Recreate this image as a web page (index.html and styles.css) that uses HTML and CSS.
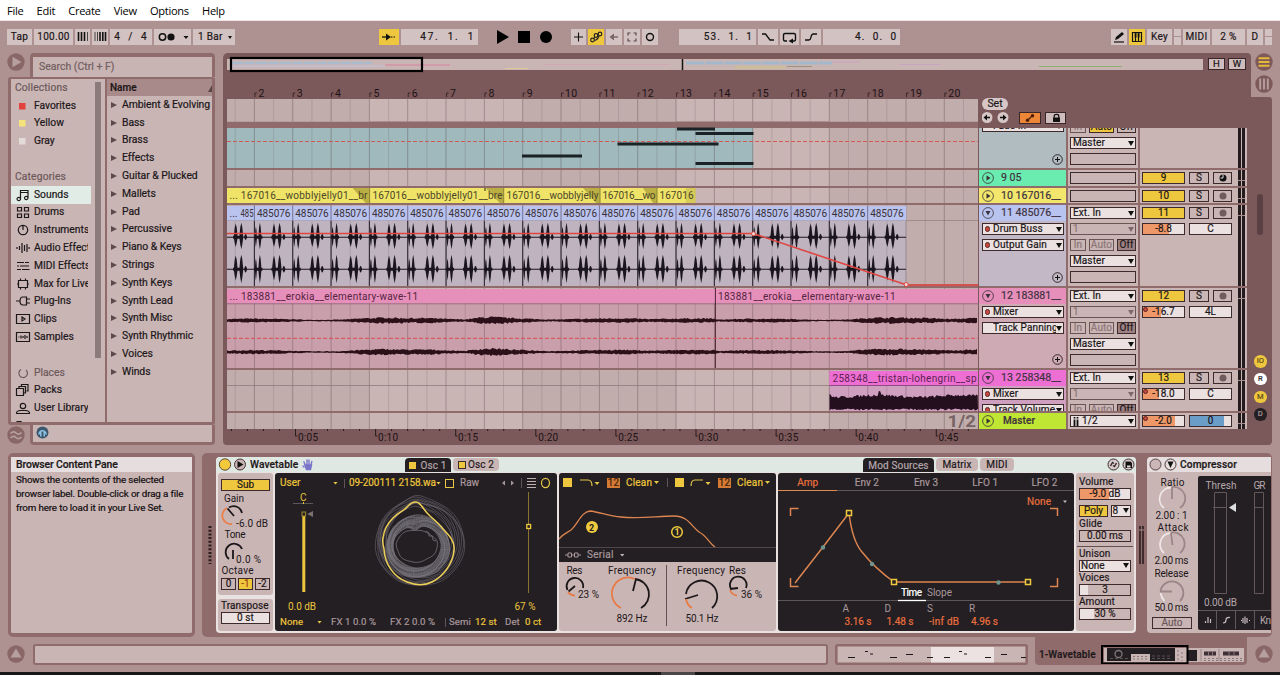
FILE: index.html
```html
<!DOCTYPE html>
<html lang="en">
<head>
<meta charset="utf-8">
<title>Live Set</title>
<link rel="stylesheet" href="styles.css">
</head>
<body>
<nav class="menubar"><span>File</span><span>Edit</span><span>Create</span><span>View</span><span>Options</span><span>Help</span></nav>

<header class="toolbar">
  <div class="group g-tempo">
    <span class="tb w25">Tap</span><span class="tb w39 wide">100.00</span>
    <span class="tb w15"><svg width="15" height="16"><path d="M3.5 3v9M6.500 3v9M9.500 3v9" stroke="#111" stroke-width="1.6"/><path d="M12.500 3v9" stroke="#111" stroke-width=".7"/></svg></span>
    <span class="tb w16"><svg width="16" height="16"><path d="M3 3v9M5.500 3v9" stroke="#111" stroke-width=".7"/><path d="M8 3v9M10.800 3v9M13.500 3v9" stroke="#111" stroke-width="1.600"/></svg></span>
    <span class="tb w41 pre">4  /  4</span>
    <span class="tb w37"><svg width="37" height="16"><circle cx="8.500" cy="8" r="3.200" fill="none" stroke="#111" stroke-width="1.500"/><circle cx="17" cy="8" r="3.600" fill="#111"/><path d="M29.500 7h5l-2.500 3z" fill="#111"/></svg></span>
    <span class="tb w42 left">1 Bar<i class="caret"></i></span>
  </div>
  <div class="group g-pos">
    <span class="tb w20 on"><svg width="20" height="16"><path d="M3 8h6" stroke="#111" stroke-width="1.300"/><path d="M7 4.500l5 3.500-5 3.500z" fill="#111"/><path d="M12 8h5" stroke="#111" stroke-dasharray="1.500 1"/></svg></span>
    <span class="tb w77 pre right">47.  1.  1</span>
  </div>
  <svg class="transport" width="56" height="16"><path d="M0 1l12 7-12 7z"/><path d="M21 2h12v12H21z"/><circle cx="49" cy="8" r="6"/></svg>
  <div class="group g-edit">
    <span class="tb w15"><svg width="15" height="16"><path d="M3 8h9M7.500 3.500v9" stroke="#111" stroke-width="1.100"/></svg></span>
    <span class="tb w16 on"><svg width="16" height="16" fill="none" stroke="#222" stroke-width="1.200"><circle cx="4.500" cy="11" r="1.800"/><circle cx="8" cy="6.500" r="1.800"/><circle cx="12" cy="5" r="1.800"/><path d="M6 9.500l1-1.500M6.500 11.500q3-.5 4.500-4.500"/></svg></span>
    <span class="tb w16"><svg width="16" height="16"><path d="M6 8h6" stroke="#776364" stroke-width="1.400"/><path d="M3.500 8l4.500-3.500v7z" fill="#776364"/></svg></span>
    <span class="tb w16"><svg width="16" height="16" fill="none" stroke="#5b494a" stroke-width="1.200"><path d="M4 6.500v-2.500h2.500M9.500 4h2.500v2.500M12 9.500v2.500h-2.500M6.500 12h-2.500v-2.500"/></svg></span>
    <span class="tb w16"><svg width="16" height="16"><circle cx="8" cy="8" r="3.500" fill="none" stroke="#111" stroke-width="1.400"/></svg></span>
  </div>
  <div class="group g-loop">
    <span class="tb w77 pre right">53.  1.  1</span>
    <span class="tb w20"><svg width="20" height="16" fill="none" stroke="#111" stroke-width="1.300"><path d="M4 5h3.500l4.500 6H16"/></svg></span>
    <span class="tb w19"><svg width="19" height="16" fill="none" stroke="#111" stroke-width="1.400"><path d="M7 12H5Q3.500 12 3.500 10.500v-4.500Q3.500 4.500 5 4.500h9q1.500 0 1.500 1.500v4.500Q15.500 12 14 12h-2"/><path d="M13 9.500v5L8.500 12z" fill="#111" stroke="none"/></svg></span>
    <span class="tb w20"><svg width="20" height="16" fill="none" stroke="#111" stroke-width="1.300"><path d="M4 11h4q1.500 0 2-3t2.500-3H16"/></svg></span>
    <span class="tb w77 pre right">4.  0.  0</span>
  </div>
  <div class="group g-right">
    <span class="tb w16"><svg width="16" height="16"><path d="M4 11l1-3 6-5 2 2-6 5z" fill="#111"/><path d="M3 13h10" stroke="#111" stroke-width="1.200"/></svg></span>
    <span class="tb w16 on"><svg width="16" height="16"><path d="M3.500 3.500h9v9h-9zM6.500 4v8M9.500 4v8" fill="none" stroke="#111" stroke-width="1.200"/><path d="M5.700 3.500h1.800v5H5.700zM8.700 3.500h1.800v5H8.700z" fill="#111"/></svg></span>
    <span class="tb w25">Key</span><span class="tb w7 split"></span><span class="tb w27">MIDI</span><span class="tb w33">2 %</span><span class="tb w16">D</span><span class="tb w7 split"></span>
  </div>
</header>

<main class="middle">
  <aside class="browser">
    <div class="round-col">
      <svg width="18" height="18"><circle cx="9" cy="9" r="8.700" fill="#8a6767"/><path d="M5.500 3.800l9 5.200-9 5.200z" fill="#b59f9f"/></svg>
      <svg width="18" height="18"><circle cx="9" cy="9" r="8.700" fill="#8a6767"/><path d="M3.500 7.500q3-3 5.500-.5t5.500-.5M3.500 12q3-3 5.500-.5t5.500-.5" fill="none" stroke="#b59f9f" stroke-width="1.700"/></svg>
    </div>
    <div class="search">Search (Ctrl + F)</div>
    <div class="panes">
      <div class="places" id="places"></div>
      <div class="names"><div class="names-head">Name<i></i></div><div id="names"></div></div>
    </div>
    <div class="preview"><svg width="13" height="13"><circle cx="6.500" cy="6.500" r="6" fill="#3d586c"/><path d="M3 8.500a3.500 3.800 0 1 1 7 0M4.800 6v4.500M8.200 6v4.500" fill="none" stroke="#8ec3e6" stroke-width="1.500"/></svg></div>
  </aside>

  <section class="arr">
    <div class="arr-top">
      <div class="arr-cap">
        <div class="overview-row">
          <svg id="overview" width="976" height="12" viewBox="227 59 976 12"></svg>
          <span class="mini w17">H</span><span class="mini w18">W</span>
        </div>
        <svg id="ruler" width="751" height="26" viewBox="227 71 751 26"></svg>
      </div>
      <div class="switches">
        <svg width="18" height="18"><circle cx="9" cy="9" r="8.700" fill="#7d595a"/><path d="M3.500 5.200h11M3.500 9h11M3.500 12.800h11" stroke="#e3b83b" stroke-width="1.900"/></svg>
        <svg width="18" height="18"><circle cx="9" cy="9" r="8.700" fill="#7d595a"/><path d="M5.200 3.500v11M9 3.500v11M12.800 3.500v11" stroke="#b79f9f" stroke-width="1.900"/></svg>
      </div>
    </div>
    <div class="arr-body">
      <svg id="timeline" width="751" height="348" viewBox="227 97 751 348"></svg>
      <div class="heads">
        <div class="heads-top">
          <span class="setbtn">Set</span>
          <div class="locator">
            <svg width="28" height="13"><circle cx="5" cy="5.500" r="5.500" fill="#d6c6c6"/><circle cx="21" cy="5.500" r="5.500" fill="#d6c6c6"/><path d="M8 5.500H4M18 5.500h4" stroke="#111" stroke-width="1.600"/><path d="M1.500 5.500l3.500-3v6zM24.500 5.500l-3.500-3v6z" fill="#111"/></svg>
            <span class="mini or"><svg width="20" height="10"><path d="M7.500 7.500l5-5" stroke="#4a1d08" stroke-width="1.300"/><circle cx="7.500" cy="7.300" r="1.700" fill="#4a1d08"/><circle cx="12.500" cy="2.800" r="1.700" fill="#4a1d08"/></svg></span>
            <span class="mini lock"><svg width="18" height="10"><path d="M6 4.500h7v4.500H6z" fill="#111"/><path d="M7.200 5V3q0-1.700 2.300-1.700T11.800 3v2" fill="none" stroke="#111" stroke-width="1.200"/></svg></span>
          </div>
        </div>
        <div class="tracks" id="tracks"></div>
      </div>
      <div class="strip">
        <i class="thumb"></i>
        <div class="dots"><b class="y">IO</b><b class="w">R</b><b class="y">M</b><b class="k">D</b></div>
      </div>
    </div>
  </section>
</main>

<section class="bottom">
  <article class="info"><h2>Browser Content Pane</h2><p>Shows the contents of the selected<br>browser label. Double-click or drag a file<br>from here to load it in your Live Set.</p></article>
  <div class="rack">
    <svg class="grip" width="4" height="38"><path d="M2 0v38" stroke="#2b1c1e" stroke-width="3" stroke-dasharray="2 1.700"/></svg>
    <article class="device wavetable">
      <header class="dev-head">
        <svg width="32" height="15"><circle cx="9" cy="7.500" r="5.700" fill="#f3c93c" stroke="#5a4638"/><circle cx="24" cy="7.500" r="5.500" fill="#c9b4b4" stroke="#4a3538"/><path d="M21.500 4l6 3.500-6 3.500z" fill="#111"/></svg>
        <strong>Wavetable</strong>
        <svg class="hand" width="12" height="14" fill="none" stroke="#7975c9" stroke-width="1.400" stroke-linecap="round"><path d="M3.500 8L2 4M5 7V2M7 7V2M8.800 8l1-4.500M2 9l-1-1"/><path d="M3 7h6.500l-1 4.500h-4z" fill="#7975c9"/></svg>
        <div class="tabs t-osc"><span class="tab dark"><i></i>Osc 1</span><span class="tab light"><i></i>Osc 2</span></div>
        <div class="tabs t-mod"><span class="tab dark">Mod Sources</span><span class="tab light">Matrix</span><span class="tab light">MIDI</span></div>
        <svg class="dev-ic" width="28" height="15"><circle cx="6.500" cy="7.500" r="5.500" fill="#d9cccc" stroke="#3a2b2c"/><path d="M3.500 9l2-3.500 1.500 1M9.500 6l-2 3.500-1.500-1" fill="none" stroke="#3a2b2c" stroke-width="1.500"/><circle cx="21.500" cy="7.500" r="5.500" fill="#d9cccc" stroke="#3a2b2c"/><path d="M18.500 4.500h5l1.500 1.500v5h-6.500z" fill="#111"/><path d="M20 8.500h3.500v2H20z" fill="#ddd"/></svg>
      </header>
      <div class="dev-body">
        <div class="col sub">
          <div class="panel sub-a">
            <span class="box yel">Sub</span>
            <svg width="49" height="84" viewBox="221 492 49 84" class="kn">
              <text x="224" y="503" textLength="20">Gain</text>
              <path d="M232 525A8.500 8.500 0 0 1 227 509" stroke="#ea7f4a" stroke-width="1.800" fill="none"/><path d="M229 508.500A8.500 8.500 0 0 1 242 514M227.500 509.500l6.500 7.500" stroke="#1c1719" stroke-width="1.800" fill="none"/>
              <text x="236" y="527.500" textLength="32">-6.0 dB</text><text x="224.500" y="539" textLength="21">Tone</text>
              <path d="M229 560A8.500 8.500 0 1 1 242 550M233 551v9" stroke="#1c1719" stroke-width="1.800" fill="none"/>
              <text x="236" y="563.500" textLength="25">0.0 %</text><text x="221.500" y="574.500" textLength="32">Octave</text>
            </svg>
            <div class="oct"><span class="box">0</span><span class="box yel o">-1</span><span class="box">-2</span></div>
          </div>
          <div class="panel sub-b"><label>Transpose</label><span class="box white">0 st</span></div>
        </div>
        <div class="dark-panel osc">
          <div class="osc-top"><span>User</span><i class="dn"></i><em></em><span class="fit">09-200111 2158.wa</span><i class="dn"></i><b class="chk"></b><span class="gray">Raw</span>
            <svg width="50" height="14"><path d="M4 4.500v5l-3-2.500zM10 4.500v5l3-2.500z" fill="#a9979b"/><path d="M20.500 2v10" stroke="#5e5559"/><path d="M26 2.500h9M26 5.500h9M26 8.500h9M26 11.500h9" stroke="#bdb0b3" stroke-width="1.200"/><ellipse cx="44.500" cy="7" rx="4" ry="4.700" fill="none" stroke="#e6c748" stroke-width="1.200"/></svg></div>
          <svg id="wave" width="282" height="124" viewBox="275 490 282 124"></svg>
          <div class="osc-bot"><span>None</span><i class="dn"></i><span class="gray">FX 1 0.0 %</span><span class="gray">FX 2 0.0 %</span><em></em><span class="gray">Semi</span><span>12 st</span><span class="gray">Det</span><span>0 ct</span></div>
        </div>
        <div class="filters">
          <div class="dark-panel filt">
            <div class="filt-top"><i class="sq"></i><svg width="22" height="12"><path d="M1 3h8q4 0 4 6" fill="none" stroke="#e6c748" stroke-width="1.200"/><path d="M15.500 5h5L18 8z" fill="#e6c748"/></svg><b>12</b><span>Clean</span><i class="dn"></i><em></em><i class="sq"></i><svg width="22" height="12"><path d="M1 9q0-6 4-6h8" fill="none" stroke="#e6c748" stroke-width="1.200"/><path d="M15.500 5h5L18 8z" fill="#e6c748"/></svg><b>12</b><span>Clean</span><i class="dn"></i></div>
            <svg width="217" height="55" viewBox="559 492 217 55"><path d="M559 539c5-6 8-6 12-9 7-6 10-18 19-19 10 1 18 5 31 6 18 2 37-1 53-1 14 0 17 10 25 16 8 4 10 11 16 15" fill="none" stroke="#dd8550" stroke-width="1.300"/><circle cx="592" cy="527" r="6" fill="#f0cb3d"/><text x="589" y="530.500" class="num">2</text><circle cx="677" cy="532" r="5.300" fill="none" stroke="#f0cb3d" stroke-width="1.500"/><text x="674.500" y="535.300" class="num y">1</text></svg>
            <div class="serial"><svg width="16" height="8"><path d="M0 4h3M6.500 4h3M13 4h3" stroke="#a9979b"/><path d="M3 2h3.500v4H3zM9.500 2H13v4H9.500z" fill="none" stroke="#a9979b"/></svg>Serial<i class="dn pale"></i></div>
          </div>
          <svg class="kn filt-k" width="217" height="69" viewBox="559 562 217 69">
            <text x="566.500" y="574" textLength="16">Res</text><text x="608" y="574" textLength="48">Frequency</text><text x="677" y="574" textLength="48">Frequency</text><text x="729" y="574" textLength="17">Res</text>
            <g fill="none" stroke="#1c1719" stroke-width="1.800"><path d="M567.500 590A8.300 8.300 0 1 1 583 588M575 586l-6.500 5.500M635 579A15.500 15.500 0 0 1 641 608M636 579l-3 12M686 594A15.700 15.700 0 1 1 712 608M685 599l13-4M731 589A8.300 8.300 0 1 1 746 588M738 588l-8 1"/><g stroke="#e87b45"><path d="M568 592q2 3 7 3.500M621 608A15.500 15.500 0 0 1 635 579M686 599q1 6 6 9M730 590q2 5 7 5.500"/></g></g>
            <text x="578" y="598" textLength="21">23 %</text><text x="616.500" y="622" textLength="31">892 Hz</text><text x="685.500" y="622" textLength="33">50.1 Hz</text><text x="741" y="598" textLength="21">36 %</text>
            <path d="M666.500 565v61" stroke="#655051"/>
          </svg>
        </div>
        <div class="dark-panel mod">
          <div class="mod-tabs"><span class="act">Amp</span><span>Env 2</span><span>Env 3</span><span>LFO 1</span><span>LFO 2</span></div>
          <svg width="296" height="140" viewBox="778 491 296 140" class="env">
            <text class="o" x="1027" y="504.500" textLength="24">None</text><path d="M1063 500.500h4l-2 2.500z" fill="#bbb"/>
            <g fill="none" stroke="#dd8550" stroke-width="1.500"><path d="M790.500 516v-7.500h8M1050 508.500h7.500v7.500M790.500 578v8.500h8M1050 586.500h7.500V578"/><path d="M795 583L823 547l26-34C851 530 856 545 862 552c8 10 18 20 32 30h134"/></g>
            <g fill="#231f23" stroke="#f0c93c" stroke-width="1.500"><path d="M846.500 510.500h5v5h-5zM891.500 579.500h5v5h-5zM1025.500 579.500h5v5h-5z"/></g>
            <g fill="#6f938d"><circle cx="823" cy="547.500" r="2.200"/><circle cx="872" cy="564" r="2.200"/><circle cx="998.500" cy="582.500" r="2.200"/></g>
            <text x="901" y="596" textLength="21" class="hot">Time</text><text x="927" y="596" textLength="25">Slope</text>
            <path d="M778 600.500h296" stroke="#5e5559"/><path d="M898 600.500h28" stroke="#fff" stroke-width="1.300"/>
            <text x="842.500" y="612">A</text><text x="884.500" y="612">D</text><text x="927" y="612">S</text><text x="969" y="612">R</text>
            <text class="o" x="844.500" y="624.500" textLength="27">3.16 s</text><text class="o" x="886.500" y="624.500" textLength="27">1.48 s</text><text class="o" x="929" y="624.500" textLength="30">-inf dB</text><text class="o" x="971" y="624.500" textLength="27">4.96 s</text>
          </svg>
        </div>
        <div class="panel glob">
          <label>Volume</label><span class="box vol">-9.0 dB</span>
          <div class="poly"><span class="box yel">Poly</span><span class="box white">8 <i class="blk"></i></span></div>
          <label>Glide</label><span class="box">0.00 ms</span><hr>
          <label>Unison</label><span class="box white dd">None<i class="blk"></i></span>
          <label class="v">Voices</label><span class="box b3">3</span>
          <label class="v">Amount</label><span class="box b30">30 %</span>
        </div>
      </div>
    </article>
    <svg class="meter" width="5" height="38"><path d="M1 0v38M4 0v38" stroke="#2b1c1e" stroke-width="1.600"/><path d="M0 4h5" stroke="#a98a8a"/></svg>
    <article class="device comp">
      <header class="dev-head"><svg width="31" height="15"><circle cx="8.500" cy="7.500" r="5.500" fill="#cbb7b7" stroke="#5a4445"/><circle cx="23.500" cy="7.500" r="5.500" fill="#e8dede" stroke="#4a3538"/><path d="M20.500 4.500h6l-3 6.500z" fill="#111"/></svg><strong>Compressor</strong></header>
      <div class="comp-body">
        <svg class="kn" width="49" height="144" viewBox="1148 473 49 144">
          <text x="1159.500" y="486" textLength="24">Ratio</text><text x="1154.500" y="518.500" textLength="32">2.00 : 1</text><text x="1156.500" y="530.500" textLength="31">Attack</text><text x="1153.500" y="564" textLength="34">2.00 ms</text><text x="1153.500" y="577" textLength="34">Release</text><text x="1153.500" y="611" textLength="34">50.0 ms</text>
          <g fill="none" stroke="#9b8586" stroke-width="1.800"><path d="M1171 487A11.500 11.500 0 0 1 1179 508M1171 499V487M1170 532.500A11.500 11.500 0 0 1 1179 553M1171.500 545l-1.500-12M1159.500 591A11.500 11.500 0 1 1 1179 601M1171 591.500h-12"/><g stroke="#efe6e6"><path d="M1163 508A11.500 11.500 0 0 1 1170 487.500M1163 553A11.500 11.500 0 0 1 1169 533M1159.500 593q1 5 4 8"/></g></g>
        </svg>
        <span class="box auto">Auto</span>
      </div>
      <svg class="comp-scope" width="74" height="154" viewBox="1197 476 74 154"><rect x="1197" y="476" width="78" height="154" rx="2" fill="#231f23"/><text x="1204.500" y="488.500" textLength="31">Thresh</text><text x="1252.500" y="488.500" textLength="12">GR</text><g fill="none" stroke="#62575b"><path d="M1213.500 492.500h12v101h-12zM1253.500 492.500h9v101h-9zM1212 507.500h13M1253 507.500h10M1197 610.500h74M1215.500 611v18M1234.500 611v18M1253.500 611v18"/></g><path d="M1235 503v9l-7-4.500z" fill="#ddd"/><text x="1203" y="606" textLength="33">0.00 dB</text><path d="M1204.500 623v-2M1207 623v-6M1209.500 623v-4M1222 623q3 0 3-3t4-2.500M1240 620.500h1M1242 618v5M1244 616.500v7.500M1246 618v5M1248 620.500h1" fill="none" stroke="#c9bcbf" stroke-width="1.200"/><text x="1259" y="624" textLength="11">Kn</text></svg>
    </article>
  </div>
</section>

<footer class="status">
  <svg width="18" height="18"><circle cx="9" cy="9" r="8.700" fill="#8a6767"/><path d="M9 3.500l5.500 9h-11z" fill="#b59f9f"/></svg>
  <div class="field"></div>
  <svg class="clipview" width="193" height="21" viewBox="835 644 193 21"><rect x="836.300" y="645.300" width="190.400" height="18.400" rx="1.500" fill="#cab5b5" stroke="#8f6c6b" stroke-width="2.600"/><rect x="931" y="647" width="63" height="15.500" fill="#ece2e2"/><path d="M848 657.500h7M865 651.500h3M870 654h3M890 657.500h7M906 654.500h7M927 657.500h6M944 657.500h6M959 651.500h3M964 654h3M985 657.500h6M1001 654.500h6M1021 657.500h5" stroke="#1c1719" stroke-width="1.200"/></svg>
  <div class="chain"><strong>1-Wavetable</strong>
    <svg width="146" height="19" viewBox="1101 645 146 19"><rect x="1104" y="648" width="140" height="14" fill="#cab5b5"/><rect x="1107" y="648" width="24" height="13" fill="#231f23"/><rect x="1131" y="648" width="19" height="6" fill="#231f23"/><rect x="1150" y="648" width="25" height="13" fill="#231f23"/><rect x="1188" y="650" width="9" height="11" fill="#231f23"/><circle cx="1118.500" cy="654" r="3.500" fill="none" stroke="#80767a" stroke-width="1.300"/><path d="M1110 658.500h19M1152 656h20M1152 658.500h20" stroke="#5a4f52" stroke-dasharray="3 2"/><path d="M1133 656.500h15M1133 659h14M1204 658.500h38M1204 660.500h38M1178 650v11M1182 652v9" stroke="#8a7779" stroke-dasharray="2 2"/><path d="M1204 651.500h12v4h-12zM1223 651.500h16v4h-16z" fill="#3d3036"/><path d="M1208.500 651v5M1212.500 651v5M1229 651v5M1234 651v5" stroke="#8a7779"/><path d="M1201 649v12M1219 649v12" stroke="#998586"/><rect x="1102" y="646" width="85.500" height="17.500" fill="none" stroke="#000" stroke-width="2"/></svg>
  </div>
  <svg class="last" width="18" height="18"><circle cx="9" cy="9" r="8.700" fill="#8a6767"/><path d="M9 3.500l5.500 9h-11z" fill="#b59f9f"/></svg>
</footer>
<div class="edge"><i></i></div>
<script src="app.js"></script>
</body>
</html>
```
FILE: styles.css
```css
* { box-sizing: border-box; }
body { margin: 0; width: 1280px; height: 675px; overflow: hidden; background: #ae9291; color: #1c1719; font: 400 10.5px/12px Roboto, "Liberation Sans", sans-serif; -webkit-text-stroke: .2px currentColor; display: flex; flex-direction: column; }
svg { display: block; flex: none; }
svg text { font-size: 10px; white-space: pre; stroke: none; }
h2, p { margin: 0; }
.menubar { flex: none; height: 21px; background: #fff; display: flex; gap: 13.200px; padding: 2px 0 0 7px; font: 11.100px/18px "Open Sans", sans-serif; color: #000; border-bottom: 1px solid #eee4e4; letter-spacing: -.300px; -webkit-text-stroke: 0; }

.toolbar { flex: none; height: 32px; padding: 8px 0 0 7px; display: flex; }
.group { display: flex; gap: 2px; height: 16px; }
.tb { height: 16px; background: #d3c2c2; display: flex; align-items: center; justify-content: center; flex: none; font-size: 10px; letter-spacing: .3px; }
.tb.on { background: #efc73f; }
.pre { white-space: pre; font-size: 10px; letter-spacing: 1.150px; }
.tb.right { justify-content: flex-end; padding-right: 3px; }
.g-pos .pre { letter-spacing: 1.700px; }
.tb.left { justify-content: space-between; padding: 0 3px 0 5px; }
.tb.wide { letter-spacing: .3px; }
.caret { border: 2.500px solid transparent; border-top: 3px solid #111; border-bottom: 0; }
.split { background: linear-gradient(#d3c2c2 7px, #ae9291 7px, #ae9291 8px, #d3c2c2 8px); }
.w7 { width: 7px; } .w15 { width: 15px; } .w16 { width: 16px; } .w17 { width: 17px; } .w18 { width: 18px; } .w19 { width: 19px; } .w20 { width: 20px; }
.w25 { width: 25px; } .w27 { width: 27px; } .w33 { width: 33px; } .w37 { width: 37px; } .w39 { width: 39px; } .w41 { width: 42px; } .w42 { width: 42px; } .w77 { width: 77px; }
.g-pos { margin-left: 144px; }
.transport { margin-left: 19px; }
.g-edit { margin-left: 18px; }
.g-loop { margin-left: 21px; gap: 2.100px; }
.g-right { margin-left: auto; padding-right: 8px; }

.middle { flex: none; height: 392px; display: flex; }
.browser { width: 223px; padding-left: 7px; display: grid; grid-template-columns: 23px 185px; grid-template-rows: 24px 348px 19px; }
.round-col { grid-column: 1; grid-row: 1 / 4; display: flex; flex-direction: column; justify-content: space-between; }
.search { grid-column: 2; grid-row: 1; border: 3px solid #8f6c6b; border-top-width: 4px; border-bottom: 0; border-radius: 4px 4px 0 0; background: #c9b4b4; padding: 4px 0 0 6px; color: #725e5f; letter-spacing: 0; }
.panes { grid-column: 1 / 3; grid-row: 2; margin-left: 1px; border: 3px solid #8f6c6b; border-radius: 3px; border-top-width: 2px; background: #cab5b5; display: flex; overflow: hidden; }
.preview { grid-column: 2; grid-row: 3; height: 20px; border: 3px solid #8f6c6b; border-top: 0; border-radius: 0 0 4px 4px; background: #cab5b5; padding: 1px 0 0 3px; }
.places { width: 96px; border-right: 2px solid #8f6c6b; height: 343px; overflow: hidden; background: linear-gradient(#8b7b7b, #8b7b7b) 84px 3px / 6px 276px no-repeat; }
.row { height: 17.800px; width: 80px; display: flex; align-items: center; overflow: hidden; }
.row svg { width: 16px; height: 14px; margin: 0 3px 0 4px; }
.row span { white-space: nowrap; width: 54px; overflow: hidden; letter-spacing: 0; font-size: 10.300px; }
.row.head span { width: 76px; padding-left: 4px; color: #6b5859; letter-spacing: .150px; }
.row.mute span { color: #6b5859; }
.row.sel { background: #e1ece6; }
.names { flex: 1; overflow: hidden; }
.names-head { height: 17px; background: #a98a8a; padding: 3px 0 0 3px; font-weight: 500; font-size: 10px; display: flex; justify-content: space-between; }
.names-head i { border-left: 4px solid transparent; border-bottom: 7px solid #5b4647; height: 0; margin-top: 3px; }
.nrow { height: 17.800px; display: flex; align-items: center; padding-left: 4px; gap: 5px; white-space: nowrap; font-size: 10.400px; letter-spacing: -.040px; }
.nrow i { border: 3.500px solid transparent; border-left: 6px solid #5b4b4c; border-right: 0; }

.arr { width: 1049px; }
.arr-top { display: flex; height: 44px; justify-content: space-between; }
.arr-cap { width: 1028px; background: #7b585a; border-radius: 5px 4px 0 0; padding: 4px 0 0 4px; }
.overview-row { height: 14px; padding-top: 1px; display: flex; gap: 3px; }
.overview-row svg { margin: 1px 2px 0 0; overflow: visible; }
#ruler { overflow: visible; }
.mini { height: 12px; border: 1px solid #3a2628; background: #cfbcbc; display: flex; align-items: center; justify-content: center; font-size: 9.500px; }
.switches { display: flex; flex-direction: column; gap: 4px; width: 21px; padding-left: 4px; }
.arr-body { height: 348px; background: #7b585a; border-radius: 0 3px 4px 4px; display: flex; padding-left: 4px; }
.heads { margin-left: 1px; width: 268px; }
.heads-top { height: 31px; padding: 1px 0 0 3px; }
.setbtn { display: block; width: 26px; height: 12px; border-radius: 6px; background: #d6c6c6; text-align: center; }
.locator { display: flex; padding-top: 2px; height: 15px; }
.or { width: 22px; margin: 0 4px 0 9px; background: #ee8637; }
.lock { width: 21px; }
.tracks { background: #8f6c6b; display: flex; flex-direction: column; gap: 2px; height: 301px; }
.track { display: grid; grid-template-columns: 87px 70px 107px; gap: 0 2px; overflow: hidden; flex: none; }
.track.h40 { height: 40px; } .track.h16 { height: 16px; } .track.h15 { height: 15px; } .track.h81 { height: 81px; } .track.h80 { height: 80px; } .track.h41 { height: 41px; }
.tn { display: flex; flex-direction: column; overflow: hidden; }
.title { height: 16px; flex: none; display: flex; align-items: center; padding-left: 3px; gap: 7px; color: #3f3340; font-size: 10.600px; white-space: nowrap; }
.title svg + span { letter-spacing: .1px; font-weight: 500; font-size: 10px; padding-left: 2px; }
.tn-body { flex: 1; padding: 2px 2px 0 3px; display: flex; flex-direction: column; gap: 4px; }
.tn-body.up { margin-top: -10px; }
.ctl { height: 12px; border: 1px solid #3d2a2c; display: flex; align-items: center; overflow: hidden; white-space: nowrap; flex: none; font-size: 10px; letter-spacing: .1px; position: relative; }
.ctl.c { justify-content: center; }
.ctl.wh { background: #ebe1e1; }
.ctl.dd { padding-left: 2px; justify-content: space-between; }
.ctl.ye { background: #efc73f; }
.ctl.off { background: #9d8182; }
.ctl.dim { color: #8b7677; border-color: #6b5455; }
.tri { border: 3.500px solid transparent; border-top: 5px solid #111; border-bottom: 0; margin-right: 1px; flex: none; }
.dim .tri { border-top-color: #7d696a; }
.nm { flex: 1; overflow: hidden; display: flex; align-items: center; gap: 3px; }
.led { width: 5px; height: 6px; border-radius: 3px; background: #c8473f; border: 1px solid #5a2422; margin-right: 3px; flex: none; }
.led.none { visibility: hidden; }
.spot { position: absolute; left: 0; top: 0; }
.plus { margin: auto 1px 3px auto; }
.io { background: #cab5b5; padding: 2px 2px 0; display: flex; flex-direction: column; gap: 4px; overflow: hidden; }
.mon { display: grid; grid-template-columns: 16px 25px 19px; gap: 3px; flex: none; }
.mx { background: #cab5b5; display: grid; grid-template-columns: 43px 20px 19px 7px; grid-template-rows: 12px 12px; gap: 4px; padding: 2px 0 0 2px; overflow: hidden; align-content: start; }
.mx .meters { grid-column: 4; grid-row: 1 / 3; height: 81px; margin: -2px 0 0 2px; width: 7px; background: linear-gradient(transparent 10px, #a98a8a 10px, #a98a8a 11px, transparent 11px), linear-gradient(90deg, #231b1e 3px, #cab5b5 3px, #cab5b5 4px, #231b1e 4px); }
.h40 .mx .meters { background: linear-gradient(90deg, #231b1e 3px, #cab5b5 3px, #cab5b5 4px, #231b1e 4px); }
.mx .pan { grid-column: 2 / 4; }
.mx .ctl { letter-spacing: 0; }
.end { justify-content: flex-end; padding-bottom: 3px; }
.strip { width: 25px; padding: 97px 0 0 7px; display: flex; flex-direction: column; }
.thumb { width: 6px; height: 41px; border-radius: 3px; background: #5a4043; margin-left: 3px; }
.dots { margin-top: 120px; display: flex; flex-direction: column; gap: 5.300px; }
.dots b { width: 12.500px; height: 12.500px; border-radius: 50%; font: 400 7.500px/12.500px Roboto, sans-serif; text-align: center; }
.dots .y { background: #efc73f; color: #5a4a1a; } .dots .w { background: #fff; } .dots .k { background: #231f23; color: #a9979b; }

.bottom { flex: none; height: 192px; padding: 8px 8px 0; display: flex; gap: 7px; }
.info { width: 187px; height: 184px; border: 3px solid #8f6c6b; border-width: 4px 3.500px 4px 3px; border-radius: 5px; background: #cab5b5; }
.info h2 { font-size: 10.400px; font-weight: 500; height: 15px; line-height: 15px; background: #e6dede; padding-left: 5px; letter-spacing: -.100px; }
.info p { padding: 1px 0 0 5px; font-size: 9.800px; line-height: 14px; white-space: nowrap; letter-spacing: -.150px; color: #140f11; }
.rack { width: 1070px; height: 184px; background: #8f6c6b; border-radius: 5px; padding: 4px 1px 4px 6px; display: flex; }
.grip, .meter { margin-top: 69px; }
.device { height: 176px; border-radius: 4px; }
.wavetable { width: 920px; margin-left: 4px; background: #eae1e1; margin-right: 3px; }
.dev-head { height: 15px; display: flex; align-items: center; font-size: 10.200px; }
.dev-head strong { font-weight: 500; letter-spacing: .1px; margin-left: 2px; width: 50px; }
.wavetable .dev-head { background: #e0e8e3; border-radius: 4px 4px 0 0; padding-right: 1px; }
.hand { margin-left: 2px; }
.tabs { display: flex; gap: 2px; height: 15px; padding-top: 1px; }
.tab { height: 13px; border-radius: 4px; line-height: 13px; display: flex; align-items: center; font-size: 10px; letter-spacing: .15px; white-space: nowrap; justify-content: center; }
.tab.dark { background: #231f23; color: #b7a8ac; height: 14px; border-radius: 4px 4px 0 0; }
.tab.light { background: #cab5b5; }
.tab i { width: 7px; height: 7px; background: #efc73f; margin-right: 4px; flex: none; }
.tab.light i { border: 1px solid #3a2b2c; width: 8px; height: 8px; margin-right: 2px; }
.t-osc { margin-left: 91px; }
.t-osc .tab { width: 46px; }
.t-mod { margin-left: 364px; }
.t-mod .tab { width: 71px; } .t-mod .tab:nth-child(2) { width: 42px; } .t-mod .tab:nth-child(3) { width: 34px; }
.dev-ic { margin-left: auto; }
.dev-body { display: flex; padding: 1px 2px 2px; height: 161px; }
.panel { background: #cab5b5; border-radius: 3px; padding: 0 3px; font-size: 10px; }
.col.sub { width: 55px; margin-right: 2px; }
.sub-a { height: 122px; padding-top: 6px; }
.sub-b { height: 32px; margin-top: 4px; padding-top: 1px; letter-spacing: .1px; }
.box { display: block; height: 12px; border: 1px solid #3d2a2c; text-align: center; line-height: 10px; font-size: 10px; white-space: nowrap; }
.yel { background: #efc73f; } .white { background: #ebe1e1; } .yel.o { color: #a04a10; }
.oct { display: grid; grid-template-columns: repeat(3, 15px); gap: 2px; margin-top: 3px; }
.kn text { fill: #1c1719; }
.dark-panel { background: #231f23; border-radius: 3px; color: #edc63d; font-size: 10px; }
.osc { width: 282px; margin-right: 2px; }
.gray { color: #a9979b; }
.dn { width: 5px; height: 3px; background: #e6c748; clip-path: polygon(0 0, 100% 0, 50% 100%); flex: none; }
.dn.pale { background: #c9bcbf; }
.dark-panel em { width: 1px; height: 9px; background: #5e5559; }
.osc-top { height: 17px; padding-top: 3px; display: grid; align-items: center; grid-template-columns: 53px 11px 5px 87px 9px 15px 41px 50px; padding-left: 5px; white-space: nowrap; }
.fit { font-size: 10px; letter-spacing: -.080px; }
.chk { width: 9px; height: 9px; border: 1px solid #e6c748; }
.osc-bot { height: 16px; display: grid; align-items: center; grid-template-columns: 37px 14px 59px 55px 4px 26px 30px 20px 24px; padding-left: 5px; font-size: 9.600px; letter-spacing: .1px; white-space: nowrap; }
.filters { width: 217px; margin-right: 2px; background: #cab5b5; border-radius: 3px; }
.filt { border-radius: 3px 3px 0 0; height: 89px; }
.filt-top { height: 19px; padding-left: 4px; display: grid; align-items: center; grid-template-columns: 16px 28px 19px 28px 13px 8px 15px 28px 19px 28px 8px; letter-spacing: .2px; }
.sq { width: 9px; height: 9px; background: #efc73f; }
.filt-top b { background: #d47a35; color: #3a1d0c; width: 13px; height: 10px; line-height: 10px; text-align: center; font-weight: 400; }
svg .num { font-weight: 700; font-size: 9px; fill: #231f23; } svg .num.y { fill: #f0cb3d; }
.serial { border-top: 1px solid #4f474b; height: 15px; color: #a9979b; display: flex; align-items: center; padding-left: 6px; gap: 6px; letter-spacing: .3px; }
.mod { width: 296px; margin-right: 2px; }
.mod-tabs { display: grid; grid-template-columns: repeat(5, 59.200px); height: 18px; border-bottom: 1px solid #5e5559; color: #a9979b; text-align: center; line-height: 19px; font-size: 10px; letter-spacing: 0; }
.mod-tabs .act { color: #e96f3f; border-bottom: 1px solid #e08a50; height: 18px; }
.env text { fill: #a9979b; } .env .o { fill: #e96f3f; stroke: #e96f3f; stroke-width: .2px; } .env .hot { fill: #fff; font-weight: 500; }
.glob { width: 58px; padding: 3px 3px 0; letter-spacing: .1px; }
.glob label, .sub-b label { display: block; height: 12px; line-height: 11px; white-space: nowrap; }
.glob hr { border: 0; border-top: 1px solid #655051; margin: 4px -2px 1px; }
.glob .v { height: 12px; }
.glob .box { letter-spacing: 0; }
.vol { background: linear-gradient(90deg, #ee9768 29px, #ebe1e1 29px); }
.poly { display: grid; grid-template-columns: 29px 20px; gap: 3px; margin: 5px 0 1px; }
.blk { display: inline-block; border: 3px solid transparent; border-top: 5px solid #111; border-bottom: 0; margin: 0 1px 1px 2px; }
.glob .dd { display: flex; justify-content: space-between; align-items: center; padding-left: 1px; height: 12px; }
.b3 { background: linear-gradient(90deg, #ebe1e1 8px, #cab5b5 8px); } .b30 { background: linear-gradient(90deg, #ebe1e1 14px, #cab5b5 14px); }
.comp { width: 125px; margin-left: 3px; background: #cab5b5; border-radius: 4px 0 0 4px; display: grid; grid-template-columns: 51px 74px; grid-template-rows: 15px 161px; overflow: hidden; }
.comp .dev-head { grid-column: 1 / 3; background: #e6dede; }
.comp-body { padding: 1px 0 0 2px; }
.auto { width: 40px; margin-left: 3px; color: #6b5859; }
.comp-scope { margin-top: 4px; } .comp-scope text { fill: #b7a8ac; }

.status { flex: none; height: 35px; display: flex; padding: 0 7px; align-items: flex-start; }
.status > svg { margin-top: 8px; }
.field { width: 795px; height: 21px; margin: 7px 7px 0 8px; border: 2.500px solid #8f6c6b; border-radius: 3px; background: #cab5b5; }
.status .clipview { margin-top: 7px; }
.chain { width: 212px; height: 28px; margin: 0 8px 0 7px; background: #8f6c6b; border-radius: 0 0 4px 4px; display: flex; padding: 8px 0 0 4px; gap: 4px; white-space: nowrap; }
.chain strong { font-weight: 500; font-size: 10px; line-height: 19px; width: 58px; letter-spacing: .1px; }
.edge { height: 3px; background: #19171a; display: flex; justify-content: center; }
.edge i { width: 34px; background: #4a4649; margin-left: 75px; }
```
FILE: app.js
```js
const $ = id => document.getElementById(id);
let seed = 7;
const rnd = () => (seed = (seed * 16807) % 2147483647) / 2147483647;

/* ---------- browser ---------- */
const stroke = d => `<svg viewBox="0 0 16 14"><path d="${d}" fill="none" stroke="#1c1719" stroke-width="1.2"/></svg>`;
const sq = c => `<svg viewBox="0 0 16 14"><rect x="4" y="4" width="6.500" height="6.500" fill="${c}"/></svg>`;
const rows = [
  ['Collections', null], ['Favorites', sq('#e2413c')], ['Yellow', sq('#f3e37a')], ['Gray', sq('#e3dada')], ['', null],
  ['Categories', null],
  ['Sounds', stroke('M5.500 11V2.500h7.500V10M5.500 4.500h7.500M2 11a1.700 1.500 0 1 0 3.500 0a1.700 1.500 0 1 0-3.500 0M9.500 10a1.700 1.500 0 1 0 3.500 0a1.700 1.500 0 1 0-3.500 0')],
  ['Drums', stroke('M2.500 2.500h4v3.500h-4zM9.500 2.500h4v3.500h-4zM2.500 9h4v3.500h-4zM9.500 9h4v3.500h-4z')],
  ['Instruments', stroke('M3.300 7a4.700 4.700 0 1 0 9.400 0a4.700 4.700 0 1 0-9.400 0M8 2.500V7')],
  ['Audio Effects', stroke('M2 6v2M4.500 5v4M7 2v10M9.500 4v6M12 3v8M14 6v2')],
  ['MIDI Effects', stroke('M2 3.500h7M10 3.500h4M5 7h9M2 7h2M2 10.500h4M7 10.500h7.500')],
  ['Max for Live', stroke('M3.500 3.500h9v7h-9zM5.500 1.500v2M10.500 1.500v2M5.500 10.500v2M10.500 10.500v2M2 7h1.500M12.500 7H14')],
  ['Plug-Ins', stroke('M1 7h4M11.500 3H8Q5 3 5 7t3 4h3.500zM11.500 5H15M11.500 9H15')],
  ['Clips', stroke('M1.500 2.500h13v9h-13zM7 5l3 2-3 2z')],
  ['Samples', stroke('M1.500 2.500h13v9h-13zM3.500 7h1M6 5.500v3M8 6v2M10 5v4M12 6v2')],
  ['', null],
  ['Places', stroke('M6 3.500a4.300 4.300 0 1 0 5 .5').replace('#1c1719', '#6b5859')],
  ['Packs', stroke('M1.500 5.500h7v7h-7zM4 5V3.500h6.500V10H9M6.500 3V1.500H13V8h-1.500')],
  ['User Library', stroke('M5.300 5a2.700 2.700 0 1 0 5.400 0a2.700 2.700 0 1 0-5.400 0M1.500 12.500q0-3 4-3h5q4 0 4 3z')],
  ['', stroke('M2 13V2.500h4l1 1.500h4')]
];
$('places').innerHTML = rows.map(([t, ic]) =>
  `<div class="row${ic === null ? ' head' : ''}${t === 'Sounds' ? ' sel' : ''}${t === 'Places' ? ' mute' : ''}">${ic || ''}<span>${t}</span></div>`).join('');
$('names').innerHTML = ['Ambient & Evolving', 'Bass', 'Brass', 'Effects', 'Guitar & Plucked', 'Mallets', 'Pad', 'Percussive', 'Piano & Keys', 'Strings', 'Synth Keys', 'Synth Lead', 'Synth Misc', 'Synth Rhythmic', 'Voices', 'Winds']
  .map(n => `<div class="nrow"><i></i>${n.replace('&', '&amp;')}</div>`).join('');

/* ---------- arrangement ---------- */
const P = 38.33, bar = b => 254.4 + (b - 2) * P;
const rect = (x, y, w, h, f, extra = '') => `<rect x="${x}" y="${y}" width="${w}" height="${h}" fill="${f}" ${extra}/>`;
const line = (x1, y1, x2, y2, s, w = 1, extra = '') => `<path d="M${x1} ${y1}L${x2} ${y2}" stroke="${s}" stroke-width="${w}" ${extra}/>`;
const text = (x, y, t, len, f = '#3c3136', extra = '') => `<text x="${x}" y="${y}" fill="${f}" ${len ? `textLength="${len}"` : ''} ${extra}>${t}</text>`;

let r = '';
for (let b = 2; b <= 20; b++) r += `<path d="M${bar(b) + .5} 97v-4h2" fill="none" stroke="#3a2628"/>` + text(bar(b) + 4, 97, b, b > 9 ? 12 : 6, '#1c1316', 'style="font-size:10.5px"');
$('ruler').innerHTML = r;

let o = rect(227, 59, 976, 11, '#cab5b5');
o += line(232, 63, 372, 63, '#a9bccd', 2.500, 'stroke-dasharray="11 1"') + line(232, 66, 385, 66, '#c5bcc8', 2) + line(385, 65, 450, 65, '#d9829f', 1) + line(505, 68.500, 528, 68.500, '#dcc79a') + line(543, 64.500, 670, 64.500, '#d4a0b2', .7);
o += line(686, 63, 832, 63, '#a3b9cb', 3, 'stroke-dasharray="18 1"') + line(735, 67.500, 785, 67.500, '#cbbd9c', 3) + line(787, 66.500, 812, 66.500, '#9d957a', 1) + line(832, 62, 860, 62, '#cf9fc2', 1) + line(900, 64.500, 940, 64.500, '#c69fc2', .8) + line(1039, 66.500, 1122, 66.500, '#8fae74', 1);
o += line(682.500, 59, 682.500, 70, '#111', 1.500) + '<rect x="231" y="58" width="191" height="13" fill="none" stroke="#000" stroke-width="2.200"/>';
$('overview').innerHTML = o;

let s = '';
const lanes = [[99, 22.500], [128, 40], [170, 16], [188, 15], [205, 81], [288, 80], [370, 41], [413, 16]];
s += rect(227, 99, 751, 330, '#8f6c6b');
lanes.forEach(([y, h]) => {
  s += rect(227, y, 751, h, '#cab5b5');
  s += rect(227, y, bar(5) - 227, h, '#c1adac') + rect(bar(9), y, bar(13) - bar(9), h, '#c1adac') + rect(bar(17), y, 978 - bar(17), h, '#c1adac');
});
const TL = 753.2;
s += rect(227, 128, TL - 227, 40, '#9fb9bd');
s += rect(227, 221, 906.2 - 227, 65, '#bfb3bf') + rect(227, 304, 751, 64, '#c99fac');
s += rect(829.3, 385, 149, 26, '#cf9fc0');
for (let b = 1; b <= 20; b++) [0, .5].forEach(q => {
  const x = (bar(b + q)).toFixed(1);
  if (x > 227) lanes.forEach(([y, h]) => { s += line(x, y, x, y + h, '#4a3537', 1, `opacity="${q ? .15 : .32}"`); });
});
s += line(227, 220.500, 978, 220.500, '#8a7475', .6) + line(227, 385.500, 829, 385.500, '#8a7475', .7);
s += line(227, 141.500, 978, 141.500, '#d4524b', 1, 'stroke-dasharray="4 2" opacity=".9"');
[[677, 129, 38], [695.500, 133.500, 58], [617.500, 144, 101], [522, 156, 60], [695.500, 163.500, 58]].forEach(([x, y, w]) => { s += rect(x, y - 1.500, w, 3, '#1b2225'); });

/* yellow clips */
s += rect(227, 188, 468.500, 15, '#efe368');
[[369.600, 13], [503.700, 14], [600, 13], [657, 10]].forEach(([x, w]) => { s += `<path d="M${x - w - 4} 188h${w + 4}v15h-4z" fill="#a99d38" opacity=".75"/>` + line(x, 188, x, 203, '#8d8235'); });
s += rect(686, 188, 9.500, 15, '#a99d38', 'opacity=".35"');
const yt = (x, t, len) => text(x, 199, t, len, '#4c4628');
s += yt(229.500, '... 167016__wobblyjelly01__br', 138) + yt(372.500, '167016__wobblyjelly01__bre', 130) + yt(506.500, '167016__wobblyjelly', 92) + yt(602.500, '167016__wo', 53) + yt(659.500, '167016', 34);
s += line(485, 188, 485, 191, '#222');

/* drum clips */
s += rect(227, 206, 679.2, 14.500, '#b9c3ee');
s += text(229.500, 217, '...', 8) + text(240.500, 217, '485', 13, '#3c3136', 'lengthAdjust="spacingAndGlyphs"');
const spike = (x, cy, u, d, w) => `M${x - w} ${cy}L${x - w * .5} ${cy - u * .7}L${x} ${cy - u}L${x + w * .5} ${cy - u * .7}L${x + w} ${cy}L${x + w * .5} ${cy + d * .6}L${x} ${cy + d}L${x - w * .5} ${cy + d * .6}Z`;
let d = '';
for (let b = 1; b <= 18; b++) {
  const x = bar(b);
  if (b > 1) s += text(x + 2.500, 217, '485076', 33.5) + line(x, 206, x, 221, '#6f6789', .9) + line(x, 221, x, 286, '#2f2933', 1.1);
  [[237.300, 14.500, 12], [269.300, 14.500, 14]].forEach(([cy, u, dn]) => {
    const hits = [[1.500, .75, .8, 1.1], [5.500, 1, 1, 1.6], [19.600, .95, .8, 2], [25.200, 1, 1, 2], [29.5, .25, .25, 1.6]];
    hits.forEach(([dx, a, c, w]) => { if (x + dx > 229) d += spike(+(x + dx).toFixed(1), cy, u * a, dn * c, w); });
    if (b > 1) d += `M${x} ${cy - 1.5}h8v3h-8z`;
    d += `M${x + 17} ${cy - 1.5}h10v3h-10z`;
  });
}
s += `<path d="${d}" fill="#1b161d"/>` + line(227, 237.300, 906, 237.300, '#1b161d', 1.100) + line(227, 269.300, 906, 269.300, '#1b161d', 1.100);
s += `<path d="M227 233.500H753L906 284.700H978" fill="none" stroke="#e0453f" stroke-width="1.600"/>` + rect(908, 284, 70, 2.200, '#d0534f');
s += '<g fill="#f0dada" stroke="#e0453f"><circle cx="753.500" cy="233.800" r="2"/><circle cx="906.200" cy="284.500" r="2"/></g>';

/* audio clips */
s += rect(227, 289, 751, 14.500, '#e78fbb') + line(227, 303.800, 978, 303.800, '#8d5a72', .8);
s += text(229.500, 299.500, '... 183881__erokia__elementary-wave-11', 188.500, '#55253f') + text(718, 299.500, '183881__erokia__elementary-wave-11', 177.500, '#55253f') + line(715.400, 288, 715.400, 368, '#4a2433', 1);
s += line(227, 338.300, 978, 338.300, '#dc4a4e', 1, 'stroke-dasharray="4 2"');
const env = [[227, 1.500], [250, 2], [280, 1.600], [312, .7], [340, .9], [365, 2.300], [385, 3], [405, 2.400], [430, 2.500], [450, 1.500], [465, 1.200], [480, 3], [492, 3.6], [515, 2.300], [550, 1], [590, 1.8], [620, 2.300], [650, 1.400], [680, 2.100], [714, 2], [718, .9], [745, 1.800], [785, 1.600], [820, .7], [848, 1], [870, 2.800], [895, 3], [930, 2.400], [950, 1.500], [978, 2.800]];
const amp = x => { let i = 0; while (i < env.length - 2 && env[i + 1][0] < x) i++; const [a, b] = [env[i], env[i + 1]]; return a[1] + (b[1] - a[1]) * (x - a[0]) / (b[0] - a[0]); };
[320.500, 352].forEach(cy => {
  let up = '', dn = '';
  for (let x = 227; x <= 977.5; x += 1.5) { const a = amp(x); up += `L${x} ${(cy - a * (.6 + rnd() * .6)).toFixed(1)}`; dn = `L${x} ${(cy + a * (.6 + rnd() * .6)).toFixed(1)}` + dn; }
  s += `<path d="M227 ${cy}${up}${dn}Z" fill="#2b1019"/>`;
});
s += rect(829.3, 371, 149, 14.500, '#ee6fd3') + text(832.500, 382, '258348__tristan-lohengrin__sp', 144, '#5d1f52') + line(829.3, 385.500, 978, 385.500, '#7d3a70', .8);
let w = 'M829.500 410.500';
for (let x = 829.5; x < 978; x += 1.3) w += `L${x.toFixed(1)} ${(397.5 + Math.sin(x / 13) - rnd() * 2.6 - (x < 832 ? 3 : 0) - (Math.abs(x - 879.5) < 1 ? 4.5 : 0)).toFixed(1)}`;
for (let x = 978; x > 829.5; x -= 1.5) w += `L${x} ${(408.5 + rnd() * 2).toFixed(1)}`;
s += `<path d="${w}Z" fill="#240f1e"/>`;
s += text(947.500, 427, '1/2', 28.5, '#776465', 'style="font-size:17px;font-weight:700" lengthAdjust="spacingAndGlyphs"');

/* time ruler */
s += rect(227, 429, 751, 16, '#7b585a');
for (let i = -4; i < 43; i++) { const x = 295.5 + i * 16.02; if (x > 227 && x < 978) s += line(x, 429, x, i % 5 ? 431 : 436, '#2b1c1e', 1); }
['05', '10', '15', '20', '25', '30', '35', '40', '45'].forEach((t, i) => { const x = 295.500 + i * 80.050; s += text(x + 2.500, 440.500, '0:' + t, 20, '#1c1316') + line(x, 436, x + 2, 436, '#2b1c1e'); });
$('timeline').innerHTML = s;

/* ---------- track headers ---------- */
const tri = '<i class="tri"></i>';
const icon = open => `<svg width="12" height="12"><circle cx="6" cy="6" r="5.400" fill="none" stroke="#3a3138" stroke-opacity=".8"/><path d="${open ? 'M3.500 4h5L6 8.500z' : 'M4.500 3.200L8.500 6l-4 2.800z'}" fill="#3a3138"/></svg>`;
const plus = '<svg class="plus" width="11" height="11"><circle cx="5.500" cy="5.500" r="4.800" fill="none" stroke="#33272a"/><path d="M3 5.500h5M5.500 3v5" stroke="#111"/></svg>';
const dd = (t, led) => `<div class="ctl wh dd">${led === undefined ? '' : `<i class="led${led ? '' : ' none'}"></i>`}<span class="nm">${t}</span>${tri}</div>`;
const mon = (a = 'off') => `<div class="mon"><span class="ctl c dim">In</span><span class="ctl c ${a === 'auto' ? 'ye' : 'dim'}">Auto</span><span class="ctl c ${a === 'off' ? 'off' : ''}">Off</span></div>`;
const io = `${dd('Ext. In')}<div class="ctl dim dd"><span class="nm">1</span>${tri}</div>${mon()}${dd('Master')}<div class="ctl"></div>`;
const blank = '<div class="ctl"></div>';
const rec = c => `<span class="ctl c"><svg width="10" height="10"><circle cx="5" cy="5" r="3.500" fill="${c}"/>${c === '#111' ? '<path d="M5 1.500v3.500H2.500" stroke="#ddd" fill="none"/>' : ''}</svg></span>`;
const vol = (v, pct, led) => `<span class="ctl c" style="background:linear-gradient(90deg,#ee9768 ${pct}%,#ebe1e1 ${pct}%)">${led ? '<svg class="spot" width="6" height="6"><circle cx="2.500" cy="2.500" r="2" fill="#c8473f" stroke="#5a2422"/></svg>' : ''}${v}</span>`;
const track = (cls, color, bg, name, open, slots, ioHtml, n, v, pan, recc = '#6f5c5d') => `<div class="track ${cls}">
  <div class="tn" style="background:${bg}"><div class="title" style="background:${color}">${icon(open)}${name}</div>${slots ? `<div class="tn-body">${slots}${cls === 'h41' ? '' : plus}</div>` : ''}</div>
  <div class="io">${ioHtml}</div>
  <div class="mx"><span class="ctl c ye">${n}</span><span class="ctl c">S</span>${rec(recc)}${v || ''}${pan ? `<span class="ctl c wh pan">${pan}</span>` : ''}<i class="meters"></i></div></div>`;
$('tracks').innerHTML =
  `<div class="track h40"><div class="tn" style="background:#b0bcc0"><div class="tn-body up">${dd('Fade In', false)}${plus}</div></div><div class="io end">${mon('auto')}${dd('Master')}${blank}</div><div class="mx"><i class="meters"></i></div></div>` +
  track('h16', '#6aecb0', '#6aecb0', '9 05', false, '', blank, 9, '', '', '#111') +
  track('h15', '#f2e76c', '#f2e76c', '10 167016__', false, '', blank, 10) +
  track('h81', '#b9c3f0', '#c3b8c6', '11 485076__', true, dd('Drum Buss', true) + dd('Output Gain', true), io, 11, vol('-8.8', 64), 'C') +
  track('h80', '#e78fbb', '#ceaab5', '12 183881__', true, dd('Mixer', true) + dd('Track Panning', false), io, 12, vol('-16.7', 43, 1), '4L') +
  track('h41', '#ee6fd3', '#cf9fc0', '13 258348__', true, dd('Mixer', true) + dd('Track Volume', true), io, 13, vol('-18.0', 40, 1), 'C') +
  `<div class="track h16"><div class="tn" style="background:#bfe632"><div class="title">${icon(false)}<span>Master</span></div></div><div class="io">${dd('<svg width="6" height="9"><path d="M1.500 0v1.500M1.500 2.500v6.500M4.500 0v1.500M4.500 2.500v6.500" stroke="#111" stroke-width="1.800"/></svg>1/2')}</div><div class="mx">${vol('-2.0', 79, 1)}<span class="ctl c pan" style="background:linear-gradient(90deg,#6b9dc9 84%,#ebe1e1 84%)">0</span><i class="meters"></i></div></div>`;

/* ---------- wavetable view ---------- */
const loop = (cx, cy, rx, ry, j, peak, ph) => {
  let p = '';
  for (let i = 0; i <= 72; i++) {
    const a = i / 72 * Math.PI * 2, k = 1 + j * Math.sin(a * 3 + ph) + j * .6 * Math.sin(a * 7 + ph * 2), top = Math.exp(-Math.pow((a - 4.62) / .22, 2)) * peak;
    p += `${i ? 'L' : 'M'}${(cx + rx * k * Math.cos(a)).toFixed(1)} ${(cy + (ry * k + top) * Math.sin(a)).toFixed(1)}`;
  }
  return p;
};
let v = '';
for (let i = 0; i < 9; i++) v += `<path d="${loop(420 - i * .2, 542.5, 44.5 - i * 1.500, 43.5 - i * 1.200, .012 + i * .002, 3, i)}" fill="none" stroke="#77727a" stroke-width=".7" opacity=".75"/>`;
for (let i = 0; i < 16; i++) v += `<path d="${loop(418 - i * .05, 546.5, 31.500 - i * .5, 31 - i * .65, .012, -i * .3, i * .7)}" fill="none" stroke="#77737b" stroke-width="1" opacity=".8"/>`;
v += `<path d="${loop(416.5, 546, 20.5, 16, .03, 0, 2)}" fill="none" stroke="#77727a" stroke-width=".8"/><path d="M426 531l3 2 0 3 3 0 1 4 3 1" fill="none" stroke="#77727a" stroke-width=".8"/>`;
v += '<path d="M416 502c5 0 7 8 14 14s10 9 13 13c7 7 12 13 11 21-1 13-10 26-22 32-8 4-17 3-25 0-13-5-22-17-23-33-1-4-2-8-1-11 1-8 4-14 10-20s11-7 14-11c3-3 4-5 9-5z" fill="none" stroke="#eed056" stroke-width="1.500"/>';
v += '<text x="300" y="501" fill="#edc63d">C</text><path d="M293 503.500h20" stroke="#5e5559"/><path d="M303.500 502v2" stroke="#edc63d"/><path d="M303.800 514v78" stroke="#edc63d" stroke-width="3"/><rect x="302" y="512" width="3.600" height="4" fill="#231f23" stroke="#a68b2e"/><path d="M313 511v6l-6-3z" fill="#7a7074"/>';
v += '<path d="M528.500 492v101" stroke="#8a7430"/><rect x="526.800" y="524.500" width="3.800" height="4" fill="#231f23" stroke="#f0c93c" stroke-width="1.300"/>';
v += '<text x="288" y="609.500" fill="#edc63d" textLength="28">0.0 dB</text><text x="514.500" y="610" fill="#edc63d" textLength="21">67 %</text>';
$('wave').innerHTML = v;
```
